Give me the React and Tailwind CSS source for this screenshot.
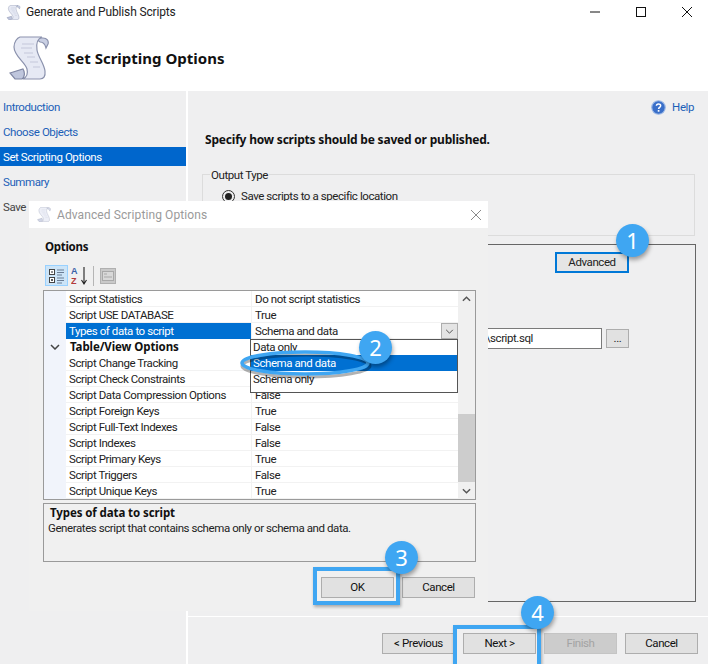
import React from 'react';

const ScrollIcon = ({ className = "" }) => (
  <svg viewBox="0 0 40 44" className={className}>
    <path d="M26 2 H34 C38 2 40 5 39 8 L37 12 C36 8 34 6 31 6 Z" fill="#c9cfe3" stroke="#8b92ad" strokeWidth="1.2" />
    <path d="M11 1 H33 C28 3 27 8 28 14 C29 21 35 27 36 35 C36.5 40 35 43 31 43 H14 C18 41 19 37 18 33 C16 26 5 20 5 11 C5 6 8 2 11 1 Z" fill="#e6e9f4" stroke="#8b92ad" strokeWidth="1.2" />
    <path d="M1 37 L14 33 C16 36 16 41 13 43 H6 Z" fill="#bfc6dd" stroke="#7f86a3" strokeWidth="1.2" />
    <path d="M13 8 H25 M12 12 H23 M15 17 H24 M18 21 H26 M21 26 H29 M24 31 H31" stroke="#c3c8da" strokeWidth="1.2" fill="none" />
  </svg>
);

const HelpIcon = () => (
  <svg viewBox="0 0 16 16" className="w-[15px] h-[15px]">
    <circle cx="8" cy="8" r="7.2" fill="#3a6fc9" stroke="#9bb8e6" strokeWidth="1.2" />
    <path d="M5.8 6.2 C5.8 3.6 10.3 3.6 10.3 6.1 C10.3 7.8 8.1 7.8 8.1 9.6" fill="none" stroke="#fff" strokeWidth="1.6" />
    <rect x="7.2" y="10.7" width="1.8" height="1.8" fill="#fff" />
  </svg>
);

const Btn = ({ children, disabled = false }) => (
  <div className={`w-[73px] h-[21px] pt-[1px] flex items-center justify-center border ${disabled ? "bg-[#cccccc] border-[#c4c4c4] text-[#a3a3a3]" : "bg-[#e1e1e1] border-[#adadad] text-[#111]"}`}>
    {children}
  </div>
);

const Callout = ({ n, className = "" }) => (
  <div className={`absolute w-[33px] h-[33px] rounded-full bg-[#3fa6f2] text-white text-[22px] tracking-normal font-['Noto_Sans',sans-serif] flex items-center justify-center shadow-[1px_3px_4px_rgba(0,0,0,0.35)] ${className}`}>
    {n}
  </div>
);

const navItems = ["Introduction", "Choose Objects", "Set Scripting Options", "Summary", "Save"];

// values under the open dropdown are left out, it covers them
const rows = [
  ["Script Statistics", "Do not script statistics"],
  ["Script USE DATABASE", "True"],
  ["Types of data to script", "Schema and data", "selected"],
  ["Table/View Options", "", "section"],
  ["Script Change Tracking", ""],
  ["Script Check Constraints", ""],
  ["Script Data Compression Options", "False"],
  ["Script Foreign Keys", "True"],
  ["Script Full-Text Indexes", "False"],
  ["Script Indexes", "False"],
  ["Script Primary Keys", "True"],
  ["Script Triggers", "False"],
  ["Script Unique Keys", "True"],
];

const GridRow = ({ name, value, kind }) => {
  if (kind === "section") {
    return (
      <div className="h-[16px] flex items-center font-['Noto_Sans',sans-serif] font-bold tracking-[-0.1px] text-[#111] bg-white">
        <div className="w-[22px] h-full bg-[#f1f4fb] flex items-center justify-center">
          <svg viewBox="0 0 10 6" className="w-[10px] h-[6px]">
            <path d="M1 1 L5 5 L9 1" fill="none" stroke="#444" strokeWidth="1.5" />
          </svg>
        </div>
        <div className="pl-[4px] whitespace-nowrap">{name}</div>
      </div>
    );
  }
  return (
    <div className="h-[16px] flex items-stretch bg-white">
      <div className="w-[22px] bg-[#f1f4fb]" />
      <div className={`w-[185px] pl-[3px] pt-[2px] whitespace-nowrap overflow-hidden flex items-center border-b ${kind === "selected" ? "bg-[#0070d2] text-white border-[#0070d2]" : "text-[#222] border-[#f2f2f2]"}`}>
        {name}
      </div>
      <div className="flex-1 relative pl-[3px] pt-[2px] flex items-center text-[#222] border-l border-b border-[#f2f2f2] whitespace-nowrap">
        {value}
        {kind === "selected" && (
          <div className="absolute right-0 top-0 w-[17px] h-[16px] bg-[#e4e4e4] border border-[#adadad] flex items-center justify-center">
            <svg viewBox="0 0 10 6" className="w-[9px] h-[5px]">
              <path d="M1 1 L5 5 L9 1" fill="none" stroke="#555" strokeWidth="1.2" />
            </svg>
          </div>
        )}
      </div>
    </div>
  );
};

const ScrollBar = () => (
  <div className="w-[17px] bg-[#f0f0f0] flex flex-col">
    <div className="h-[17px] flex items-center justify-center">
      <svg viewBox="0 0 10 6" className="w-[9px] h-[6px]">
        <path d="M1 5 L5 1 L9 5" fill="none" stroke="#555" strokeWidth="1.6" />
      </svg>
    </div>
    <div className="h-[107px]" />
    <div className="h-[68px] bg-[#cdcdcd]" />
    <div className="h-[17px] flex items-center justify-center">
      <svg viewBox="0 0 10 6" className="w-[9px] h-[6px]">
        <path d="M1 1 L5 5 L9 1" fill="none" stroke="#555" strokeWidth="1.6" />
      </svg>
    </div>
  </div>
);

const Dialog = () => (
  <div className="absolute left-[29px] top-[201px] w-[459px] h-[410px] bg-[#f0f0f0] flex flex-col">
    {/* Title bar */}
    <div className="h-[27px] bg-white flex items-center pl-[8px] pr-[6px] text-[#9a9a9a]">
      <ScrollIcon className="w-[14px] h-[15px] opacity-70" />
      <span className="ml-[6px] text-[12px] tracking-[0.1px]">Advanced Scripting Options</span>
      <svg viewBox="0 0 12 12" className="w-[12px] h-[12px] ml-auto">
        <path d="M1 1 L11 11 M11 1 L1 11" stroke="#8a8a8a" strokeWidth="1" />
      </svg>
    </div>

    <div className="pl-[14px] w-[447px] flex flex-col">
      <div className="mt-[10px] pl-[2px] h-[18px] flex items-center font-['Noto_Sans',sans-serif] font-bold tracking-[-0.3px] text-[#111]">Options</div>

      {/* Toolbar */}
      <div className="mt-[9px] h-[21px] flex items-center pl-[2px]">
        <div className="w-[23px] h-[21px] bg-[#cce4f7] border border-[#99d1ff] flex items-center justify-center">
          <svg viewBox="0 0 16 16" className="w-[16px] h-[16px]">
            <rect x="0.5" y="1.5" width="5" height="5" fill="#fff" stroke="#444" />
            <rect x="0.5" y="9.5" width="5" height="5" fill="#fff" stroke="#444" />
            <path d="M2 4 H4 M2 12 H4 M3 11 V13" stroke="#222" />
            <path d="M8 2 H15 M8 4.5 H15 M8 7 H13 M8 10 H15 M8 12.5 H15 M8 15 H13" stroke="#6b7c93" />
          </svg>
        </div>
        <div className="ml-[3px] w-[18px] h-[21px]">
          <svg viewBox="0 0 18 21" className="w-[18px] h-[21px]">
            <text x="0" y="9" fontSize="9" fontWeight="700" fill="#3a62a8" fontFamily="Liberation Sans">A</text>
            <text x="0" y="19" fontSize="9" fontWeight="700" fill="#b23a3a" fontFamily="Liberation Sans">Z</text>
            <path d="M13 2 V18 M10.5 15 L13 19 L15.5 15" fill="none" stroke="#222" strokeWidth="1.1" />
          </svg>
        </div>
        <div className="ml-[4px] w-px h-[20px] bg-[#b5b5b5]" />
        <div className="ml-[6px] w-[16px] h-[16px] bg-[#c9c9c9] border border-[#b0b0b0] flex items-center justify-center">
          <svg viewBox="0 0 12 10" className="w-[12px] h-[10px]">
            <rect x="0.5" y="0.5" width="11" height="9" fill="#d8d8d8" stroke="#a8a8a8" />
            <path d="M2 3 H5 M2 6 H10" stroke="#a8a8a8" />
          </svg>
        </div>
      </div>

      {/* Property grid */}
      <div className="relative mt-[4px] h-[210px] border border-[#9a9a9a] bg-white flex">
        <div className="flex-1">
          {rows.map((r) => (
            <GridRow key={r[0]} name={r[0]} value={r[1]} kind={r[2]} />
          ))}
        </div>
        <ScrollBar />

        {/* Open dropdown */}
        <div className="absolute left-[206px] top-[48px] w-[208px] h-[54px] bg-white border border-[#555] text-[#222]">
          <div className="h-[15px] pl-[2px] pt-[1px] flex items-center">Data only</div>
          <div className="h-[16px] pl-[2px] pt-[1px] flex items-center bg-[#0070d2] text-white">Schema and data</div>
          <div className="h-[16px] pl-[2px] pt-[1px] flex items-center">Schema only</div>
        </div>
      </div>

      {/* Description */}
      <div className="mt-[3px] h-[59px] border border-[#9a9a9a] text-[#222] pl-[4px] pt-[1px]">
        <div className="font-['Noto_Sans',sans-serif] font-bold tracking-[-0.1px] text-[#111] pl-[2px] leading-[16px]">Types of data to script</div>
        <div className="leading-[15px]">Generates script that contains schema only or schema and data.</div>
      </div>

      {/* Buttons */}
      <div className="mt-[15px] flex justify-end gap-2 pr-[1px]">
        <Btn>OK</Btn>
        <Btn>Cancel</Btn>
      </div>
    </div>
  </div>
);

export default function App() {
  return (
    <div className="relative w-[708px] h-[664px] overflow-hidden bg-white flex flex-col font-['Roboto',sans-serif] text-[11.5px] tracking-[-0.42px]">
      {/* Window title */}
      <div className="h-[24px] shrink-0 flex items-center pl-[6px] text-[12px] tracking-[-0.15px] text-[#222]">
        <ScrollIcon className="w-[15px] h-[15px]" />
        <span className="ml-[5px]">Generate and Publish Scripts</span>
        <div className="ml-auto flex items-center">
          <svg viewBox="0 0 12 12" className="w-[12px] h-[12px] mr-[34px]">
            <path d="M1 6 H11" stroke="#111" strokeWidth="1" />
          </svg>
          <svg viewBox="0 0 12 12" className="w-[12px] h-[12px] mr-[34px]">
            <rect x="1.5" y="1.5" width="9" height="9" fill="none" stroke="#111" />
          </svg>
          <svg viewBox="0 0 12 12" className="w-[12px] h-[12px] mr-[15px]">
            <path d="M1 1 L11 11 M11 1 L1 11" stroke="#111" strokeWidth="1" />
          </svg>
        </div>
      </div>

      {/* Page header */}
      <div className="h-[67px] shrink-0 flex items-center pl-[9px]">
        <ScrollIcon className="w-[40px] h-[44px]" />
        <h1 className="ml-[18px] mt-[2px] text-[15px] tracking-normal font-['Noto_Sans',sans-serif] font-bold text-[#111]">Set Scripting Options</h1>
      </div>

      <div className="flex-1 flex min-h-0">
        {/* Sidebar */}
        <div className="w-[186px] bg-[#efeff0] pt-[6px] flex flex-col gap-[6px]">
          {navItems.map((item) => (
            <div
              key={item}
              className={`h-[19px] pl-[3px] pt-[2px] flex items-center ${item === "Set Scripting Options" ? "bg-[#0066cc] text-white" : item === "Save" ? "text-[#444]" : "text-[#1c5fb8]"}`}
            >
              {item}
            </div>
          ))}
        </div>

        {/* Main panel */}
        <div className="ml-[2px] flex-1 bg-[#efeff0] flex flex-col text-[#222]">
          <div className="h-[33px] pr-[14px] flex items-center justify-end gap-[6px] text-[#1c5fb8]">
            <HelpIcon />
            Help
          </div>
          <div className="mt-[7px] pl-[17px] h-[18px] flex items-center font-['Noto_Sans',sans-serif] font-bold tracking-[-0.2px] text-[12px] text-[#111]">
            Specify how scripts should be saved or published.
          </div>

          <fieldset className="mt-[17px] ml-[14px] mr-[13px] h-[70px] border border-[#dcdcdc] pl-[7px]">
            <legend className="px-[1px] pt-[1px] leading-[16px]">Output Type</legend>
            <div className="mt-[5px] ml-[12px] flex items-center gap-[6px]">
              <div className="w-[13px] h-[13px] rounded-full border border-[#333] flex items-center justify-center">
                <div className="w-[7px] h-[7px] rounded-full bg-[#222]" />
              </div>
              Save scripts to a specific location
            </div>
          </fieldset>

          {/* Options frame, mostly behind the dialog */}
          <div className="mt-[8px] ml-[14px] mr-[12px] h-[359px] border border-[#666] flex flex-col items-end">
            <div className="mt-[7px] mr-[66px] w-[74px] h-[21px] border-2 border-[#0078d7] bg-[#e5e5e5] flex items-center justify-center">
              Advanced
            </div>
            <div className="mt-[55px] mr-[66px] flex items-center gap-[4px]">
              <div className="w-[300px] h-[21px] bg-white border border-[#7a7a7a] flex items-center justify-end pr-[2px] text-[#222]">
                <span className="mr-[66px]">\script.sql</span>
              </div>
              <div className="w-[23px] h-[19px] bg-[#e1e1e1] border border-[#adadad] flex items-center justify-center">...</div>
            </div>
          </div>

          {/* Footer */}
          <div className="mt-[14px] h-[48px] border-t border-white flex justify-end gap-2 pr-[10px] pt-[16px]">
            <Btn>&lt; Previous</Btn>
            <Btn>Next &gt;</Btn>
            <Btn disabled>Finish</Btn>
            <Btn>Cancel</Btn>
          </div>
        </div>
      </div>

      <Dialog />

      {/* Annotations */}
      <svg viewBox="0 0 708 664" className="absolute left-0 top-0 w-[708px] h-[664px] pointer-events-none">
        <ellipse cx="306" cy="366" rx="64" ry="11" fill="none" stroke="#000" strokeOpacity="0.3" strokeWidth="3" />
        <ellipse cx="305" cy="363" rx="63" ry="11" fill="none" stroke="#3fa6f2" strokeWidth="3.5" />
      </svg>

      <div className="absolute left-[313px] top-[567px] w-[87px] h-[38px] border-[4px] border-[#3fa6f2] shadow-[1px_2px_3px_rgba(0,0,0,0.3)]" />
      <div className="absolute left-[453px] top-[625px] w-[88px] h-[45px] border-[4px] border-[#3fa6f2] shadow-[1px_2px_3px_rgba(0,0,0,0.3)]" />

      <Callout n="1" className="left-[616px] top-[224px]" />
      <Callout n="2" className="left-[359px] top-[331px]" />
      <Callout n="3" className="left-[385px] top-[541px]" />
      <Callout n="4" className="left-[521px] top-[596px]" />
    </div>
  );
}
